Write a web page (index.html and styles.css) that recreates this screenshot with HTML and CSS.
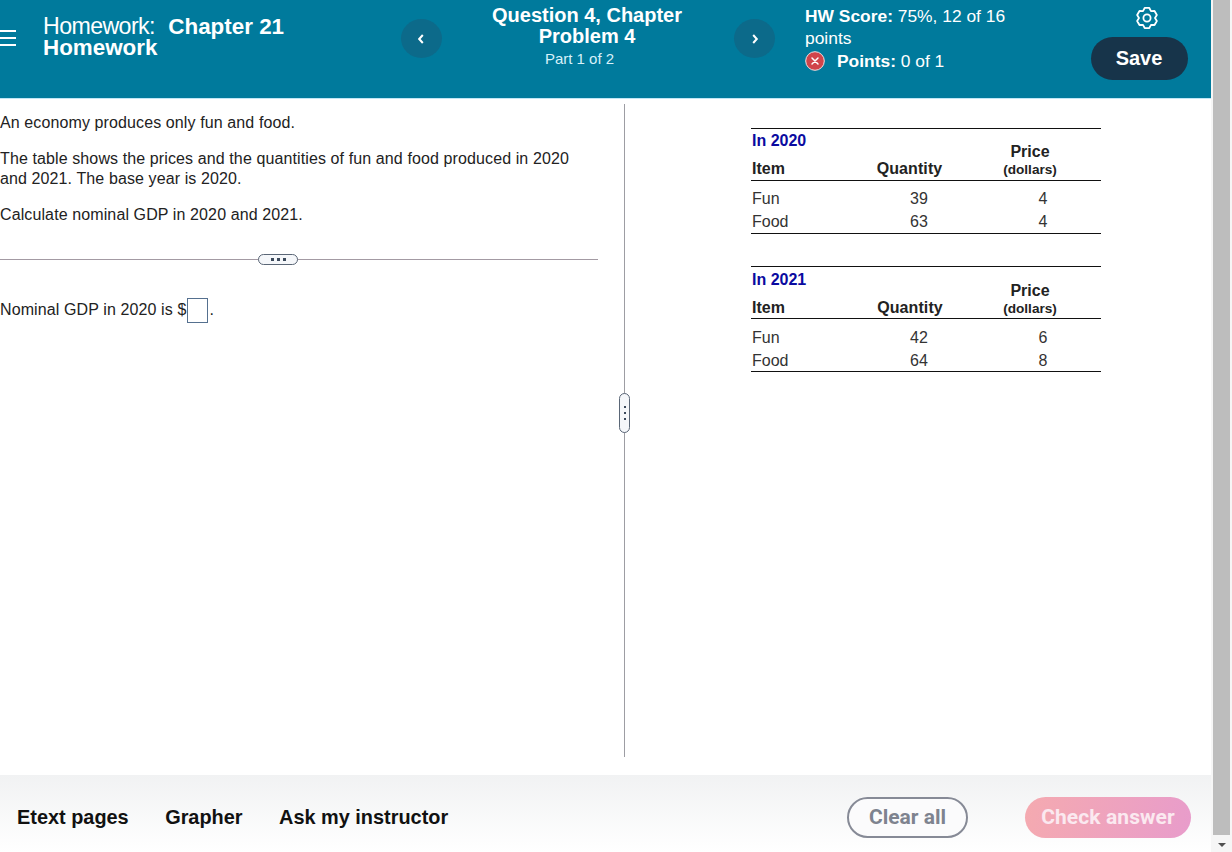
FILE: index.html
```html
<!DOCTYPE html>
<html lang="en">
<head>
<meta charset="utf-8">
<title>Homework: Chapter 21 Homework</title>
<link rel="stylesheet" href="styles.css">
</head>
<body>
<div class="app">
  <div class="main">
    <header class="header">
      <button class="menu" aria-label="Menu"><span></span><span></span><span></span></button>
      <h1 class="title"><span class="title-light">Homework:</span> <b>Chapter 21 Homework</b></h1>
      <button class="nav nav-prev" aria-label="Previous">
        <svg width="8" height="10" viewBox="0 0 8 10"><path d="M4.800 1 1.200 5l3.600 4" fill="none" stroke="#fff" stroke-width="2"/></svg>
      </button>
      <div class="question">
        <div class="q-name">Question 4, Chapter Problem 4</div>
        <div class="q-part">Part 1 of 2</div>
      </div>
      <button class="nav nav-next" aria-label="Next">
        <svg width="8" height="10" viewBox="0 0 8 10"><path d="M2.200 1 5.800 5l-3.600 4" fill="none" stroke="#fff" stroke-width="2"/></svg>
      </button>
      <div class="score">
        <div class="score-line"><b>HW Score:</b> 75%, 12 of 16 points</div>
        <div class="points">
          <svg class="x-icon" width="20" height="20" viewBox="0 0 20 20"><circle cx="10" cy="10" r="9.300" fill="#d0444a" stroke="#f3dfe0" stroke-width="1"/><path d="M7 7l6 6M13 7l-6 6" stroke="#fff" stroke-width="1.500" stroke-linecap="round"/></svg>
          <span><b>Points:</b> 0 of 1</span>
        </div>
      </div>
      <div class="actions">
        <svg class="gear" width="24" height="24" viewBox="0 0 24 24" fill="none" stroke="#fff" stroke-width="1.800" stroke-linejoin="round"><path d="M9.680 1.970H14.320L16 5.070 19.530 4.980 21.850 8.990 20 12 21.850 15.010 19.530 19.020 16 18.930 14.320 22.030H9.680L8 18.930 4.470 19.020 2.150 15.010 4 12 2.150 8.990 4.470 4.980 8 5.070Z"/><circle cx="12" cy="12" r="3.600"/></svg>
        <button class="save">Save</button>
      </div>
    </header>

    <div class="content">
      <section class="left">
        <div class="question-text">
          <p>An economy produces only fun and food.</p>
          <p>The table shows the prices and the quantities of fun and food produced in 2020 and 2021. The base year is 2020.</p>
          <p>Calculate nominal GDP in 2020 and 2021.</p>
        </div>
        <div class="rule"><span class="pill"><i></i><i></i><i></i></span></div>
        <p class="answer">Nominal GDP in 2020 is $<span class="input"></span>.</p>
      </section>
      <div class="divider"><span class="grip"><i></i><i></i><i></i></span></div>
      <section class="right">
        <table class="data">
          <colgroup><col class="c1"><col class="c2"><col></colgroup>
          <thead>
            <tr><th class="year" colspan="2">In 2020</th><th class="price" rowspan="2">Price<small>(dollars)</small></th></tr>
            <tr class="heads"><th class="item">Item</th><th class="qty">Quantity</th></tr>
          </thead>
          <tbody>
            <tr class="first"><td>Fun</td><td class="n1">39</td><td class="n2">4</td></tr>
            <tr><td>Food</td><td class="n1">63</td><td class="n2">4</td></tr>
          </tbody>
        </table>
        <table class="data data-b">
          <colgroup><col class="c1"><col class="c2"><col></colgroup>
          <thead>
            <tr><th class="year" colspan="2">In 2021</th><th class="price" rowspan="2">Price<small>(dollars)</small></th></tr>
            <tr class="heads"><th class="item">Item</th><th class="qty">Quantity</th></tr>
          </thead>
          <tbody>
            <tr class="first"><td>Fun</td><td class="n1">42</td><td class="n2">6</td></tr>
            <tr><td>Food</td><td class="n1">64</td><td class="n2">8</td></tr>
          </tbody>
        </table>
      </section>
    </div>

    <footer class="footer">
      <nav class="links"><a>Etext pages</a><a>Grapher</a><a>Ask my instructor</a></nav>
      <div class="footer-actions">
        <button class="clear">Clear all</button>
        <button class="check">Check answer</button>
      </div>
    </footer>
  </div>
  <div class="scrollbar">
    <div class="thumb"></div>
    <div class="arrow"></div>
  </div>
</div>
</body>
</html>
```
FILE: styles.css
```css
* { box-sizing: border-box; }
html, body { margin: 0; height: 100%; overflow: hidden; }
body { font-family: "Liberation Sans", Arial, sans-serif; color: #222; background: #fff; }
button { font: inherit; border: 0; padding: 0; background: none; }
p { margin: 0; }

.app { display: flex; width: 1232px; height: 852px; }
.main { width: 1211px; display: flex; flex-direction: column; }

.header { height: 99px; flex: none; display: flex; background: #007a9c; border-bottom: 1px solid #bfe6f5; color: #fff; }
.menu { width: 43px; flex: none; height: 20px; margin-top: 28px; display: flex; flex-direction: column; gap: 5px; padding-top: 2px; }
.menu span { display: block; width: 16px; height: 2px; background: #fff; }
.title { width: 358px; flex: none; margin: 15.500px 0 0; font-size: 23.200px; line-height: 21.500px; font-weight: 400; }
.title-light { letter-spacing: -.6px; margin-right: 7px; }
.title b { font-size: 22.400px; }
.nav { width: 41px; height: 39px; flex: none; margin-top: 19px; border-radius: 50%; background: #0c6a8a; display: flex; align-items: center; justify-content: center; }
.question { width: 292px; flex: none; margin-top: 5px; padding: 0 32px 0 30px; text-align: center; }
.q-name { font-size: 20px; line-height: 21px; font-weight: 700; }
.q-part { font-size: 15px; line-height: 20px; margin: 2px 15px 0 0; color: #d8f1fa; }
.score { width: 228px; flex: none; margin: 5px 0 0 30px; font-size: 17.400px; line-height: 22px; }
.score-line { width: 215px; }
.points { display: flex; align-items: center; gap: 12px; margin-top: 1px; }
.x-icon { flex: none; }
.actions { width: 98px; flex: none; margin-left: 57px; display: flex; flex-direction: column; align-items: center; padding-top: 6px; }
.gear { margin-left: 16px; flex: none; }
.save { width: 97px; height: 43px; margin-top: 7px; border-radius: 22px; background: #17344a; color: #fff; font-size: 20px; font-weight: 700; }

.content { flex: 1; display: flex; padding-top: 5px; min-height: 0; }
.left { width: 624px; flex: none; padding-top: 9px; font-size: 16px; line-height: 20px; letter-spacing: .11px; }
.question-text { width: 598px; display: flex; flex-direction: column; gap: 16px; padding-right: 20px; }
.rule { width: 598px; height: 1px; background: #a39aa3; margin-top: 34px; display: flex; justify-content: center; align-items: center; padding-right: 42px; }
.pill { width: 40px; height: 11px; border: 1px solid #5a6676; border-radius: 6px; background: #f5f7fa; display: flex; align-items: center; justify-content: center; gap: 3px; flex: none; }
.pill i { width: 3px; height: 3px; background: #3c4a5c; }
.answer { display: flex; align-items: center; margin-top: 37px; height: 26px; }
.input { width: 21px; height: 25px; border: 1px solid #55708f; margin: 0 1px; }

.divider { width: 1px; flex: none; height: 653px; background: #9d9da3; position: relative; }
.grip { position: absolute; left: -5px; top: 289px; width: 11px; height: 40px; border: 1px solid #5a6676; border-radius: 6px; background: #f5f7fa; display: flex; flex-direction: column; align-items: center; justify-content: center; gap: 4px; }
.grip i { width: 2px; height: 2px; background: #3c4a5c; }

.right { padding: 24px 0 0 126px; }
.data { width: 350px; border-collapse: collapse; border-top: 1px solid #111; border-bottom: 1px solid #111; font-size: 16px; margin-bottom: 32px; table-layout: fixed; }
.data-b { margin-bottom: 0; }
.c1 { width: 91px; }
.c2 { width: 134px; }
.data th, .data td { padding: 0; font-weight: 400; }
.data .year { text-align: left; color: #0a0aa0; font-weight: 700; height: 24px; padding: 1px 0 0 1px; vertical-align: top; line-height: 22px; }
.data-b .year { padding-top: 2px; line-height: 21px; }
.data .heads th { font-weight: 700; height: 28px; padding-top: 7px; vertical-align: top; border-bottom: 1px solid #111; line-height: 18px; }
.data-b .heads th { padding-top: 8px; }
.data .item { text-align: left; padding-left: 1px; }
.data .qty { text-align: center; letter-spacing: .1px; padding-left: 1px; }
.data-b .qty { padding-left: 2px; }
.data .price { text-align: center; padding-right: 17px; line-height: 18px; font-weight: 700; vertical-align: bottom; padding-bottom: 1px; border-bottom: 1px solid #111; }
.price small { display: block; font-size: 13.600px; line-height: 18px; }
.data-b .price small { line-height: 17px; }
.data td { height: 23px; padding-left: 1px; color: #333; }
.data-b td { padding-top: 2px; }
.data .first td { height: 30px; padding-top: 7px; }
.data-b .first td { padding-top: 8px; }
.data .n1 { text-align: center; padding-left: 20px; }
.data .n2 { text-align: center; padding-left: 9px; padding-right: 0; }

.footer { height: 77px; margin-top: auto; flex: none; display: flex; justify-content: space-between; align-items: center; background: linear-gradient(#f1f2f3, #fff); padding: 7px 20px 0 17px; }
.links { display: flex; gap: 36.500px; font-size: 19.900px; font-weight: 700; color: #111; }
.footer-actions { display: flex; gap: 57px; font-family: Roboto, sans-serif; }
.clear { width: 121px; height: 41px; border: 2.500px solid #868a96; border-radius: 21px; background: #fbfbfc; color: #7e838f; font-size: 21px; font-weight: 700; }
.check { width: 166px; height: 41px; border-radius: 21px; background: linear-gradient(100deg, #f5aab0, #e89ccb); color: #fbe9f0; font-size: 21px; font-weight: 700; letter-spacing: .1px; }

.scrollbar { width: 21px; flex: none; background: #f6f6f6; padding: 0 2px; display: flex; flex-direction: column; }
.thumb { flex: 1; background: #bdbdbd; }
.arrow { height: 17px; position: relative; }
.arrow::after { content: ""; position: absolute; left: 5px; top: 8px; border: 4px solid transparent; border-top: 4px solid #505050; border-bottom: 0; }
```
